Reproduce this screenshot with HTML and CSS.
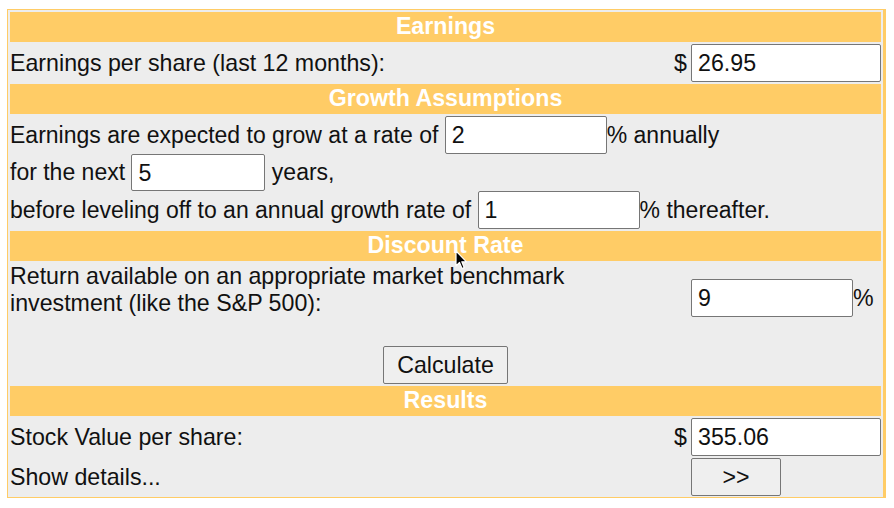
FILE: index.html
```html
<!DOCTYPE html>
<html>
<head>
<meta charset="utf-8">
<title>Stock Value Calculator</title>
<link rel="stylesheet" href="styles.css">
</head>
<body>
<div class="calc">
  <div class="hdr">Earnings</div>
  <div class="lbl">Earnings per share (last 12 months):</div>
  <div class="unit">$</div>
  <div class="val"><input class="field wide" type="text" value="26.95"></div>

  <div class="hdr">Growth Assumptions</div>
  <div class="full growth">
    <div class="line l1">Earnings are expected to grow at a rate of&nbsp;<input class="field mid" type="text" value="2">% annually</div>
    <div class="line l2">for the next&nbsp;<input class="field short" type="text" value="5">&nbsp;years,</div>
    <div class="line l3">before leveling off to an annual growth rate of&nbsp;<input class="field mid" type="text" value="1">% thereafter.</div>
  </div>

  <div class="hdr">Discount Rate</div>
  <div class="lbl discount">Return available on an appropriate market benchmark<br>investment (like the S&amp;P 500):</div>
  <div class="unit"></div>
  <div class="val"><input class="field mid" type="text" value="9">%</div>

  <div class="full action"><button class="btn calc-btn" type="button">Calculate</button></div>

  <div class="hdr">Results</div>
  <div class="lbl">Stock Value per share:</div>
  <div class="unit">$</div>
  <div class="val"><input class="field wide" type="text" value="355.06"></div>

  <div class="lbl">Show details...</div>
  <div class="unit"></div>
  <div class="val"><button class="btn more-btn" type="button">&gt;&gt;</button></div>

  <svg class="pointer" width="13" height="20" viewBox="0 0 13 20" aria-hidden="true">
    <path d="M1 1 L1 16 L4.5 12.5 L7 18.5 L9.2 17.6 L6.8 11.8 L11.5 11.8 Z" fill="#000" stroke="#fff" stroke-width="1.2" stroke-linejoin="round"/>
  </svg>
</div>
</body>
</html>
```

FILE: styles.css
```css
html, body {
  margin: 0;
  padding: 0;
  background: #fff;
}

body {
  padding: 9px 0 0 7px;
  font-family: "Liberation Sans", Arial, sans-serif;
  font-size: 23.2px;
  color: #111;
}

.calc {
  position: relative;
  width: 871px;
  padding: 2px 2px 1px 2px;
  background: #ededed;
  border: 1px solid #ffcc66;
  border-right-width: 3px;
  display: grid;
  grid-template-columns: 1fr 18px 190px;
  column-gap: 2px;
  row-gap: 2px;
}

.hdr {
  grid-column: 1 / -1;
  height: 30px;
  background: #ffcc66;
  color: #fff;
  font-weight: bold;
  text-align: center;
  line-height: 29px;
}

.full {
  grid-column: 1 / -1;
}

.lbl {
  display: flex;
  align-items: center;
  min-height: 38px;
}

.unit {
  display: flex;
  align-items: center;
  justify-content: flex-end;
  padding-right: 2px;
}

.val {
  display: flex;
  align-items: center;
}

.field {
  box-sizing: border-box;
  height: 38px;
  margin: 0;
  padding: 1px 6px 0;
  border: 1px solid #767676;
  border-radius: 2px;
  background: #fff;
  font-family: "Liberation Sans", Arial, sans-serif;
  font-size: 23.2px;
  color: #111;
}

.wide { width: 190px; }
.mid { width: 162px; }
.short { width: 134px; }

.growth {
  display: flex;
  flex-direction: column;
  font-size: 23px;
}

.line {
  display: flex;
  align-items: center;
  white-space: nowrap;
}

.l1 { height: 38px; }
.l2 { height: 37px; }
.l2 .field { height: 37px; }
.l3 { height: 38px; }

.discount {
  align-items: flex-start;
  height: 70px;
  line-height: 27px;
}

.action {
  display: flex;
  justify-content: center;
  padding-top: 11px;
}

.btn {
  box-sizing: border-box;
  height: 38px;
  margin: 0;
  border: 1px solid #767676;
  border-radius: 2px;
  background: #efefef;
  font-family: "Liberation Sans", Arial, sans-serif;
  font-size: 23.2px;
  color: #111;
}

.calc-btn { width: 125px; }
.more-btn { width: 90px; }

.pointer {
  position: absolute;
  left: 447px;
  top: 240px;
}
```
